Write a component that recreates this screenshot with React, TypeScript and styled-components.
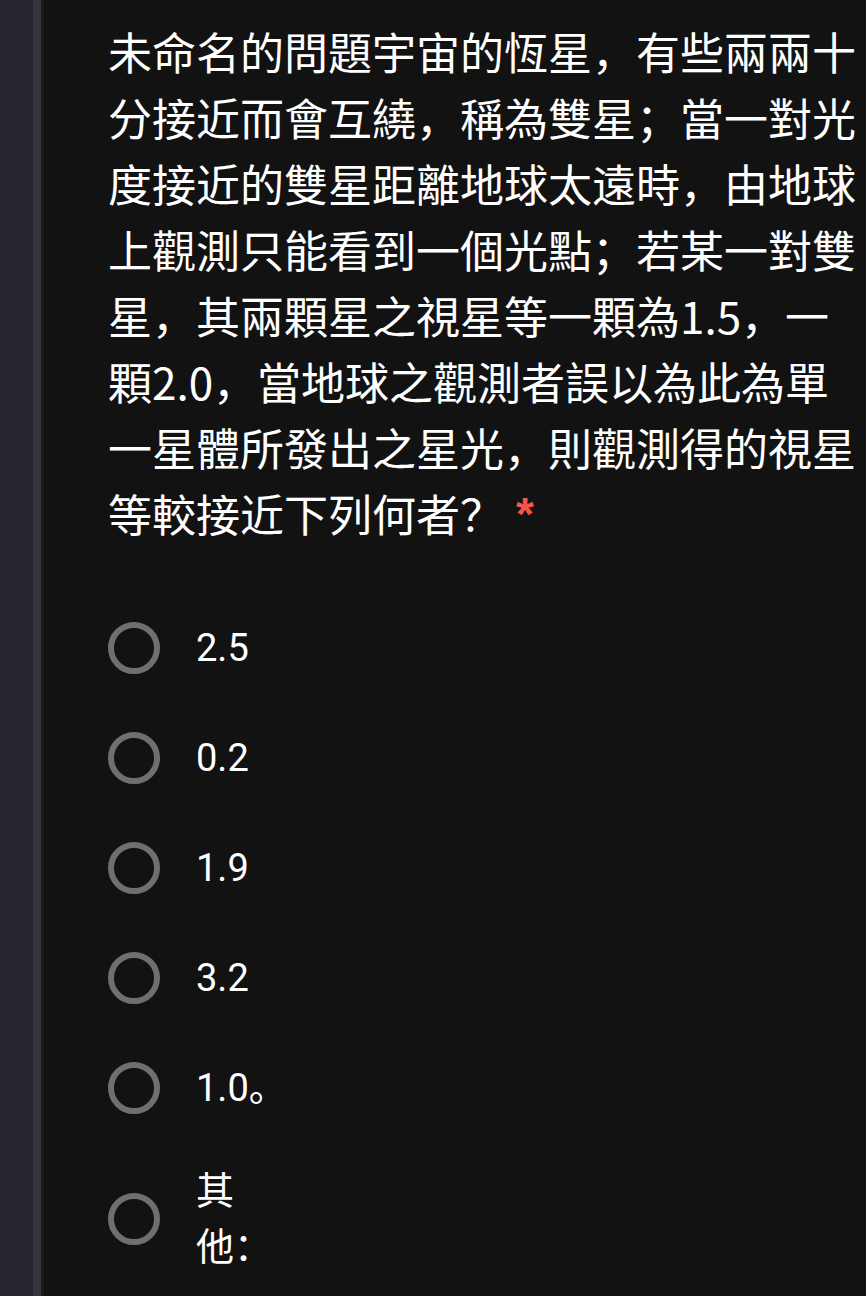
import React from "react";
import styled, { createGlobalStyle } from "styled-components";

const GlobalStyle = createGlobalStyle`
  html, body {
    margin: 0;
    padding: 0;
    background: #121212;
    overflow: hidden;
  }
  * { box-sizing: border-box; }
`;

const Page = styled.div`
  display: flex;
  width: 866px;
  height: 1296px;
  background: #121212;
  overflow: hidden;
`;

const Rail = styled.div`
  flex: 0 0 33px;
  background: #29252f;
`;

const RailEdge = styled.div`
  flex: 0 0 8px;
  background: #36353a;
`;

const RailShadow = styled.div`
  flex: 0 0 3px;
  background: #1b1b1c;
`;

const Main = styled.main`
  flex: 1;
  padding: 18px 0 0 64px;
  display: flex;
  flex-direction: column;
`;

const Question = styled.div`
  width: 752px;
  font-family: "Noto Sans CJK SC", "Noto Sans", sans-serif;
  font-size: 44px;
  line-height: 66px;
  color: #ffffff;
  margin: 0 0 47px;
`;

const Required = styled.span`
  font-family: "Liberation Sans", Arial, sans-serif;
  font-weight: 700;
  font-size: 46px;
  line-height: 1;
  color: #f2564a;
  margin-left: 12px;
  vertical-align: 2px;
`;

const Options = styled.div`
  display: flex;
  flex-direction: column;
`;

const Option = styled.label`
  display: flex;
  align-items: center;
  min-height: 110px;
  padding: 20px 0;
  gap: 36px;
`;

const Radio = styled.span`
  flex: 0 0 52px;
  width: 52px;
  height: 52px;
  border-radius: 50%;
  border: 6px solid #6d7073;
`;

const Label = styled.span<{ $narrow?: boolean }>`
  font-family: Roboto, "Noto Sans CJK SC", sans-serif;
  font-size: 38px;
  line-height: 56px;
  color: #ffffff;
  max-width: ${(p) => (p.$narrow ? "90px" : "none")};
`;

const options = ["2.5", "0.2", "1.9", "3.2", "1.0。"];

export default function App() {
  return (
    <>
      <GlobalStyle />
      <Page>
        <Rail />
        <RailEdge />
        <RailShadow />
        <Main>
          <Question>
            未命名的問題宇宙的恆星，有些兩兩十分接近而會互繞，稱為雙星；當一對光度接近的雙星距離地球太遠時，由地球上觀測只能看到一個光點；若某一對雙星，其兩顆星之視星等一顆為1.5，一顆2.0，當地球之觀測者誤以為此為單一星體所發出之星光，則觀測得的視星等較接近下列何者？
            <Required>*</Required>
          </Question>
          <Options>
            {options.map((o) => (
              <Option key={o}>
                <Radio />
                <Label>{o}</Label>
              </Option>
            ))}
            <Option>
              <Radio />
              <Label $narrow>其他：</Label>
            </Option>
          </Options>
        </Main>
      </Page>
    </>
  );
}
